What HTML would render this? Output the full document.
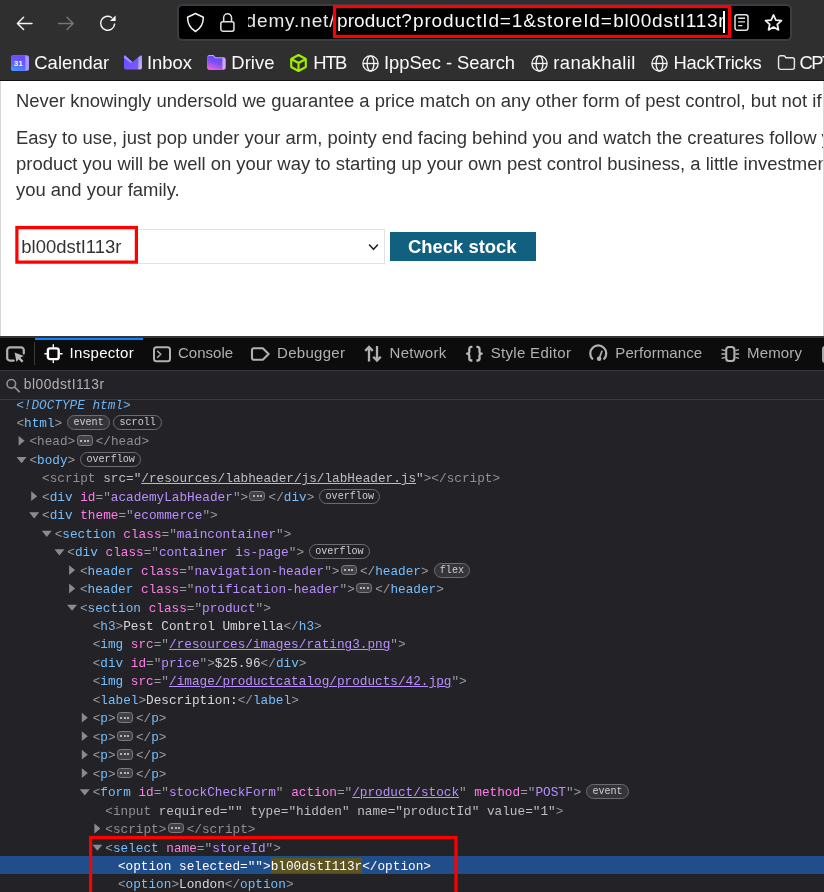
<!DOCTYPE html>
<html>
<head>
<meta charset="utf-8">
<style>
*{box-sizing:border-box;margin:0;padding:0}
html,body{width:824px;height:892px;overflow:hidden;background:#fff;font-family:"Liberation Sans",sans-serif}
#root{position:relative;width:824px;height:892px;overflow:hidden;will-change:transform}
svg{position:absolute;overflow:visible}
/* ---------- browser chrome ---------- */
#chrome{position:absolute;left:0;top:0;width:824px;height:80px;background:#2f2f2f;overflow:hidden}
#chromeline{position:absolute;left:0;top:79.700px;width:824px;height:1.100px;background:#121212}
#urlbar{position:absolute;left:177px;top:4px;width:615px;height:37px;background:#000;border:2px solid #3b3d43;border-radius:5.500px}
.urltxt{position:absolute;top:3.2px;font-size:19px;line-height:24px;letter-spacing:0.62px;color:#fbfbfe;white-space:nowrap}
.bm{position:absolute;top:50.5px;font-size:18.4px;line-height:24px;color:#fbfbfe;white-space:nowrap}
/* ---------- page ---------- */
#page{position:absolute;left:0;top:81px;width:824px;height:255px;background:#fff;overflow:hidden}
.pt{position:absolute;left:16px;font-size:18.46px;line-height:26px;color:#333332;white-space:nowrap}
/* ---------- devtools ---------- */
#dt{position:absolute;left:0;top:336px;width:824px;height:556px;background:#232327;overflow:hidden}
#dtbar{position:absolute;left:0;top:0;width:824px;height:35px;background:#0c0c0d;border-top:2px solid #36363a;border-bottom:1px solid #38383d}
.tab{position:absolute;top:8px;font-size:15px;line-height:18px;color:#b1b1b3;white-space:nowrap}
#search{position:absolute;left:0;top:35px;width:824px;height:29px;background:#232327;border-bottom:1px solid #3a3a3f}
#tree{position:absolute;left:0;top:64px;width:824px;height:492px;overflow:hidden;font-family:"Liberation Mono",monospace;font-size:12.72px;color:#b1b1b3}
.r{position:absolute;left:0;width:824px;height:18.46px;line-height:18.46px;white-space:pre}
.r>span.l{position:absolute;top:0;left:0}
.t{color:#75bfff}.g{color:#9a9a9e}.a{color:#ff7de9}.v{color:#b98eff}.w{color:#d7d7db}.d{color:#8f8f94}.dl{color:#bdbdc2}
.u{text-decoration:underline;text-underline-offset:.7px;text-decoration-thickness:1px}
.bd{display:inline-block;vertical-align:top;margin-top:.2px;height:15px;line-height:13.7px;border:1px solid #6c6c71;border-radius:7.5px;font-size:10.1px;color:#cfcfd3;padding:0 5.2px;margin-left:5px}
.bd.f{background:#343439}
.el{display:inline-block;vertical-align:top;margin:1.9px 3.1px 0 1.3px;width:16px;height:10.5px;border:1px solid #7c7c81;border-radius:3.5px;background:#414146;position:relative}
.el i{position:absolute;top:3.3px;width:2px;height:2px;border-radius:1px;background:#dcdce0}
.tw{position:absolute}
.s{color:#fff}
.hl{color:#fff}
</style>
</head>
<body>
<div id="root">
<div id="chrome">
<!-- back -->
<svg style="left:15px;top:14px" width="19" height="19" viewBox="0 0 19 19"><g transform="translate(0.60,0.40) scale(1.0000,1.0000)"><path d="M16.400 9H2M8 2.800L1.800 9l6.200 6.200" fill="none" stroke="#f4f4f6" stroke-width="1.450" stroke-linecap="round" stroke-linejoin="round"/></g></svg>
<!-- forward -->
<svg style="left:57px;top:14px" width="19" height="19" viewBox="0 0 19 19"><g transform="translate(0.00,0.40) scale(1.0000,1.0000)"><path d="M1.500 9H16M10 2.800L16.200 9l-6.200 6.200" fill="none" stroke="#767676" stroke-width="1.450" stroke-linecap="round" stroke-linejoin="round"/></g></svg>
<!-- reload -->
<svg style="left:99px;top:14px" width="19" height="19" viewBox="0 0 19 19"><g transform="translate(0.00,0.30) scale(1.0000,1.0000)"><path d="M15.600 9.800A7 7 0 1 1 12.600 3.200" fill="none" stroke="#f4f4f6" stroke-width="1.450" stroke-linecap="round"/><path d="M16.6 1.2v5.6h-5.6z" fill="#fbfbfe"/></g></svg>
<div id="urlbar"></div>
<!-- shield -->
<svg style="left:186px;top:12px" width="20" height="22" viewBox="0 0 20 22"><g transform="translate(0.00,0.00) scale(1.0000,1.0000)"><path d="M9.450 1.550L17.350 5.200C17.350 11.500 14.300 16.600 9.450 19.500 4.600 16.600 1.550 11.500 1.550 5.200z" fill="none" stroke="#f4f4f6" stroke-width="1.500" stroke-linejoin="round"/></g></svg>
<!-- lock -->
<svg style="left:220px;top:12px" width="17" height="22" viewBox="0 0 17 22"><g transform="translate(0.00,0.00) scale(1.0000,1.0000)"><rect x=".850" y="9.650" width="13.100" height="9.500" rx="1.900" fill="none" stroke="#e2e2e4" stroke-width="1.500"/><path d="M3.650 9.600V5.700a3.950 3.950 0 0 1 7.900 0V9.600" fill="none" stroke="#e2e2e4" stroke-width="1.500"/></g></svg>
<div style="position:absolute;left:247.700px;top:6px;width:479.300px;height:33px;overflow:hidden">
<div class="urltxt" style="right:391.600px;letter-spacing:.87px;color:#e9e9ed">ademy.net/</div>
<div class="urltxt" style="left:89.300px;letter-spacing:.12px">product?</div>
<div class="urltxt" style="left:165.300px;letter-spacing:.85px">productId=1&amp;storeId=</div>
<div class="urltxt" style="left:365.500px;letter-spacing:.75px">bl00dstI113r</div>
</div>
<div style="position:absolute;left:723px;top:11px;width:2.300px;height:21.5px;background:#fff"></div>
<svg style="left:330px;top:3px" width="405" height="39" viewBox="0 0 405 39"><g transform="translate(0.00,0.00) scale(1.0000,1.0000)"><rect x="4.500" y="3.500" width="395.100" height="29.900" fill="none" stroke="#fb0007" stroke-width="3.200"/></g></svg>
<!-- reader -->
<svg style="left:734px;top:13px" width="16" height="19" viewBox="0 0 16 19"><g transform="translate(0.20,0.90) scale(1.0000,1.0000)"><rect x=".8" y=".8" width="13" height="15.500" rx="2.300" fill="none" stroke="#e4e4e8" stroke-width="1.500"/><path d="M4 4.300h6.800M4 8h6.800M4 11.700h4.200" stroke="#e4e4e8" stroke-width="1.400" fill="none"/></g></svg>
<!-- star -->
<svg style="left:764px;top:13px" width="20" height="19" viewBox="0 0 20 19"><g transform="translate(0.00,0.40) scale(1.0000,1.0000)"><path d="M9.500 1.500l2.350 5.150 5.650.6-4.200 3.800 1.200 5.500-5-2.850-5 2.850 1.200-5.500L1.500 7.250l5.650-.6z" fill="none" stroke="#f4f4f6" stroke-width="1.700" stroke-linejoin="round"/></g></svg>

<!-- bookmarks -->
<!-- calendar -->
<svg style="left:11px;top:55px" width="19" height="17" viewBox="0 0 19 17"><g transform="translate(0.00,0.30) scale(1.0000,1.0000)"><defs><linearGradient id="gc" x1=".3" y1="0" x2="0" y2="1"><stop offset="0" stop-color="#6f48ff"/><stop offset=".55" stop-color="#5a6bff"/><stop offset="1" stop-color="#3aa2ff"/></linearGradient></defs><rect x="0" y="0" width="18" height="15.500" rx="2.600" fill="#a796ff"/><path d="M2.600 0H14.300V15.500H2.600A2.600 2.600 0 0 1 0 12.900V2.600A2.600 2.600 0 0 1 2.600 0z" fill="url(#gc)"/><text x="7.400" y="11" font-family="Liberation Sans" font-weight="700" font-size="7.800" fill="#fff" text-anchor="middle">31</text></g></svg>
<div class="bm" style="left:34.300px;letter-spacing:0.04px">Calendar</div>
<!-- inbox -->
<svg style="left:124px;top:55px" width="19" height="16" viewBox="0 0 19 16"><g transform="translate(0.00,0.40) scale(1.0000,1.0000)"><defs><linearGradient id="gi" x1="0" y1="0" x2="1" y2="1"><stop offset="0" stop-color="#6a46ff"/><stop offset="1" stop-color="#7d5eff"/></linearGradient><linearGradient id="gi2" x1="0" y1="0" x2="0" y2="1"><stop offset="0" stop-color="#a48eff"/><stop offset="1" stop-color="#c2b4ff"/></linearGradient></defs><path d="M0 1.200C0 .3.900-.1 1.600.5L8.400 6.700 14.200 1.900V14.200H1.800A1.800 1.800 0 0 1 0 12.400z" fill="url(#gi)"/><path d="M0 1.200C0 .3.900-.1 1.600.5L8.400 6.700 7.100 7.800 0 2.300z" fill="#a593ff"/><path d="M14.200 1.900L16.300.3C17-.2 18 .2 18 1.100V12.400A1.800 1.800 0 0 1 16.200 14.200H14.200z" fill="url(#gi2)"/></g></svg>
<div class="bm" style="left:147px;letter-spacing:0.00px">Inbox</div>
<!-- drive -->
<svg style="left:207px;top:55px" width="20" height="16" viewBox="0 0 20 16"><g transform="translate(0.30,0.10) scale(1.0000,1.0000)"><defs><linearGradient id="gd" x1=".65" y1="0" x2=".25" y2="1"><stop offset="0" stop-color="#6246ff"/><stop offset=".45" stop-color="#7a4ff6"/><stop offset="1" stop-color="#ea62d6"/></linearGradient><linearGradient id="gd2" x1="0" y1="0" x2="0" y2="1"><stop offset="0" stop-color="#c4a6ff"/><stop offset="1" stop-color="#e9a2ee"/></linearGradient></defs><path d="M0 2.300A2.300 2.300 0 0 1 2.300 0H6.200l2 2.200h7.900a2.300 2.300 0 0 1 2.300 2.300v7.900a2.300 2.300 0 0 1-2.300 2.300H2.300A2.300 2.300 0 0 1 0 12.400z" fill="url(#gd2)"/><path d="M0 2.600A2 2 0 0 1 2 .9H5.800l2 2.200h7.300V14.700H2.300A2.300 2.300 0 0 1 0 12.400z" fill="url(#gd)"/></g></svg>
<div class="bm" style="left:231.300px;letter-spacing:0.07px">Drive</div>
<!-- htb -->
<svg style="left:290px;top:54px" width="18" height="19" viewBox="0 0 18 19"><g transform="translate(0.00,0.00) scale(1.0000,1.0000)"><path d="M8.500 1L15.800 5v8L8.500 17 1.200 13V5zM1.200 5l7.300 4 7.300-4M8.500 9v8" fill="none" stroke="#9fef00" stroke-width="2.100" stroke-linejoin="round"/></g></svg>
<div class="bm" style="left:313.300px;letter-spacing:-1.43px">HTB</div>
<!-- globes -->
<svg style="left:362px;top:55px" width="18" height="18" viewBox="0 0 18 18"><g transform="translate(0.00,0.00) scale(1.0000,1.0000)"><g fill="none" stroke="#f4f4f6" stroke-width="1.350"><circle cx="8.500" cy="8.500" r="7.600"/><ellipse cx="8.500" cy="8.500" rx="3.400" ry="7.600"/><path d="M1 8.500h15"/></g></g></svg>
<div class="bm" style="left:384px;letter-spacing:-0.06px">IppSec - Search</div>
<svg style="left:531px;top:55px" width="18" height="18" viewBox="0 0 18 18"><g transform="translate(0.00,0.00) scale(1.0000,1.0000)"><g fill="none" stroke="#f4f4f6" stroke-width="1.350"><circle cx="8.500" cy="8.500" r="7.600"/><ellipse cx="8.500" cy="8.500" rx="3.400" ry="7.600"/><path d="M1 8.500h15"/></g></g></svg>
<div class="bm" style="left:553.300px;letter-spacing:0.37px">ranakhalil</div>
<svg style="left:651px;top:55px" width="18" height="18" viewBox="0 0 18 18"><g transform="translate(0.00,0.00) scale(1.0000,1.0000)"><g fill="none" stroke="#f4f4f6" stroke-width="1.350"><circle cx="8.500" cy="8.500" r="7.600"/><ellipse cx="8.500" cy="8.500" rx="3.400" ry="7.600"/><path d="M1 8.500h15"/></g></g></svg>
<div class="bm" style="left:673.500px;letter-spacing:-0.23px">HackTricks</div>
<!-- folder -->
<svg style="left:777px;top:54px" width="19" height="17" viewBox="0 0 19 17"><g transform="translate(0.80,0.90) scale(1.0000,1.0000)"><path d="M.750 2.750A2 2 0 0 1 2.750.750H5.700c.7 0 1.100.2 1.500.8l.9 1.300h6.500a2 2 0 0 1 2 2v7.600a2 2 0 0 1-2 2H2.750a2 2 0 0 1-2-2z" fill="none" stroke="#e6e6e8" stroke-width="1.450" stroke-linejoin="round"/></g></svg>
<div class="bm" style="left:799.500px;letter-spacing:-1.500px">CPTS</div>
</div>
<div id="chromeline"></div>
<div id="page">
<div class="pt" style="top:7px">Never knowingly undersold we guarantee a price match on any other form of pest control, but not if</div>
<div class="pt" style="top:44px">Easy to use, just pop under your arm, pointy end facing behind you and watch the creatures follow you</div>
<div class="pt" style="top:70px">product you will be well on your way to starting up your own pest control business, a little investment</div>
<div class="pt" style="top:96px">you and your family.</div>
<!-- select -->
<div style="position:absolute;left:16px;top:148px;width:369px;height:35px;border:1px solid #e0e3e3;background:#fff"></div>
<div style="position:absolute;left:21.300px;top:153px;font-size:18.440px;line-height:26px;color:#333332;white-space:nowrap">bl00dstI113r</div>
<svg style="left:368px;top:162px" width="11" height="8" viewBox="0 0 11 8"><g transform="translate(0.50,0.80) scale(1.0000,1.0000)"><path d="M1 1.200l4 4.300 4-4.300" fill="none" stroke="#222" stroke-width="1.600" stroke-linecap="round" stroke-linejoin="round"/></g></svg>
<svg style="left:14px;top:143px" width="128" height="43" viewBox="0 0 128 43"><g transform="translate(0.00,0.00) scale(1.0000,1.0000)"><rect x="2.900" y="3.500" width="119.500" height="34.600" fill="none" stroke="#fe0000" stroke-width="3.200"/></g></svg>
<!-- button -->
<div style="position:absolute;left:390px;top:151px;width:146px;height:28.700px;background:#11607f"></div>
<div style="position:absolute;left:408px;top:152.500px;font-size:18.440px;font-weight:700;line-height:26px;color:#fff;white-space:nowrap">Check stock</div>
<div style="position:absolute;left:0;top:0;width:1px;height:255px;background:#d6d6d6"></div>
<div style="position:absolute;left:823px;top:0;width:1px;height:255px;background:#d8d8d8"></div>
</div>
<div id="dt">
<div id="dtbar"></div>
<div style="position:absolute;left:35px;top:1.500px;width:108px;height:2.500px;background:#0a84ff"></div>
<!-- picker -->
<svg style="left:6px;top:10px" width="21" height="18" viewBox="0 0 21 18"><g transform="translate(0.00,0.20) scale(1.0000,1.0000)"><path d="M7.800 14.400H3.900a2.700 2.700 0 0 1-2.700-2.700V3.900a2.700 2.700 0 0 1 2.700-2.700h11.200a2.700 2.700 0 0 1 2.700 2.700v3.400" fill="none" stroke="#b1b1b3" stroke-width="2.200" stroke-linecap="round"/><path d="M8.600 6.200l1.900 9.600 2.100-2.800 3.100 3.400 1.800-1.700-3.200-3.300 3.500-1.500z" fill="#b9b9bb"/></g></svg>
<div style="position:absolute;left:34px;top:6px;width:1px;height:22.500px;background:#38383d"></div>
<!-- inspector icon -->
<svg style="left:44px;top:8px" width="20" height="20" viewBox="0 0 20 20"><g transform="translate(0.40,0.20) scale(1.0000,1.0000)"><rect x="3.500" y="4.150" width="10.800" height="10.800" rx="2.200" fill="none" stroke="#fff" stroke-width="2.400"/><path d="M8.900 0v3.200M8.900 16v2.800M0 9.550h2.500M15.300 9.550h2.900" stroke="#fff" stroke-width="1.400" fill="none"/></g></svg>
<div class="tab" style="left:69.600px;color:#fff;letter-spacing:.3px">Inspector</div>
<!-- console icon -->
<svg style="left:153px;top:10px" width="19" height="17" viewBox="0 0 19 17"><g transform="translate(0.00,0.30) scale(1.0000,1.0000)"><rect x="1" y="1" width="16" height="14" rx="2.500" fill="none" stroke="#b1b1b3" stroke-width="2"/><path d="M4.600 5l3.200 3-3.200 3" fill="none" stroke="#b1b1b3" stroke-width="1.500" stroke-linecap="round" stroke-linejoin="round"/></g></svg>
<div class="tab" style="left:178px;letter-spacing:.02px">Console</div>
<!-- debugger icon -->
<svg style="left:251px;top:11px" width="20" height="15" viewBox="0 0 20 15"><g transform="translate(0.00,0.20) scale(1.0000,1.0000)"><path d="M2.800 1h9l5.800 5.750-5.800 5.750h-9A1.800 1.800 0 0 1 1 10.700V2.800A1.800 1.800 0 0 1 2.800 1z" fill="none" stroke="#b1b1b3" stroke-width="2.100" stroke-linejoin="round"/></g></svg>
<div class="tab" style="left:277px;letter-spacing:.3px">Debugger</div>
<!-- network icon -->
<svg style="left:364px;top:9px" width="19" height="18" viewBox="0 0 19 18"><g transform="translate(0.00,0.30) scale(1.0000,1.0000)"><path d="M5 16.200V2M1.200 5.600l3.800-3.900 3.800 3.900M13 .8v14.200M9.200 11.400l3.800 3.900 3.800-3.900" fill="none" stroke="#b1b1b3" stroke-width="2.300" stroke-linecap="butt" stroke-linejoin="miter"/></g></svg>
<div class="tab" style="left:389.500px;letter-spacing:.3px">Network</div>
<!-- style editor icon -->
<svg style="left:465px;top:9px" width="19" height="17" viewBox="0 0 19 17"><g transform="translate(0.40,0.80) scale(1.0000,1.0000)"><path d="M7 1.100H5.900a2 2 0 0 0-2 2v2.800a2 2 0 0 1-2.200 2 2 2 0 0 1 2.200 2v2.800a2 2 0 0 0 2 2H7M11 1.100h1.100a2 2 0 0 1 2 2v2.800a2 2 0 0 0 2.200 2 2 2 0 0 0-2.200 2v2.800a2 2 0 0 1-2 2H11" fill="none" stroke="#b9b9bb" stroke-width="2.300" stroke-linejoin="round"/></g></svg>
<div class="tab" style="left:490.700px;letter-spacing:.32px">Style Editor</div>
<!-- performance icon -->
<svg style="left:589px;top:9px" width="20" height="18" viewBox="0 0 20 18"><g transform="translate(0.00,0.00) scale(1.0000,1.0000)"><path d="M3.300 13.800A8 8 0 1 1 15.200 13.800" fill="none" stroke="#b1b1b3" stroke-width="2.200" stroke-linecap="round"/><circle cx="10.100" cy="13.700" r="2.300" fill="#b1b1b3"/><path d="M10.300 13.300l2.600-7" stroke="#b1b1b3" stroke-width="1.700" stroke-linecap="round"/></g></svg>
<div class="tab" style="left:615.300px;letter-spacing:.1px">Performance</div>
<!-- memory icon -->
<svg style="left:721px;top:10px" width="20" height="17" viewBox="0 0 20 17"><g transform="translate(0.00,0.00) scale(1.0000,1.0000)"><rect x="5.200" y="1" width="8.200" height="14" rx="2.800" fill="none" stroke="#b1b1b3" stroke-width="2.100"/><path d="M.6 3.600l3.600 1M.4 8H4.200M.6 12.400l3.600-1M18 3.600l-3.600 1M18.200 8h-3.800M18 12.400l-3.600-1" stroke="#b1b1b3" stroke-width="1.500" fill="none"/></g></svg>
<div class="tab" style="left:747px;letter-spacing:.15px">Memory</div>
<div style="position:absolute;left:821.600px;top:9.700px;width:10px;height:17px;border:2.200px solid #a9a9ab;border-radius:3px"></div>
<!-- search -->
<div id="search"></div>
<svg style="left:6px;top:42px" width="15" height="15" viewBox="0 0 15 15"><g transform="translate(0.00,0.50) scale(1.0000,1.0000)"><circle cx="5.300" cy="5.300" r="4.300" fill="none" stroke="#8f8f94" stroke-width="1.600"/><path d="M8.600 8.600l4.600 4.600" stroke="#8f8f94" stroke-width="1.800" stroke-linecap="round"/></g></svg>
<div style="position:absolute;left:23.800px;top:40px;font-size:13.800px;line-height:18px;color:#b1b1b3;letter-spacing:.48px;white-space:nowrap">bl00dstI113r</div>
<div id="tree">
<div class="r" style="top:-3.50px"><span class="l" style="left:16.15px"><span style="color:#6fb2f0;font-style:italic">&lt;!DOCTYPE html&gt;</span></span></div>
<div class="r" style="top:14.96px"><span class="l" style="left:16.45px"><span class="g">&lt;</span><span class="t">html</span><span class="g">&gt;</span><span class="bd f">event</span><span class="bd" style="margin-left:3.4px">scroll</span></span></div>
<svg class="tw" style="left:18px;top:35px" width="7" height="11" viewBox="0 0 7 11"><g transform="translate(0.60,0.92) scale(1.0000,1.0000)"><path d="M0 0L6 4.900 0 9.800z" fill="#8a8a8f"/></g></svg>
<div class="r" style="top:33.42px"><span class="l" style="left:29.45px"><span class="d">&lt;</span><span class="d">head</span><span class="d">&gt;</span><span class="el"><i style="left:2.6px"></i><i style="left:6.1px"></i><i style="left:9.6px"></i></span><span class="d">&lt;/</span><span class="d">head</span><span class="d">&gt;</span></span></div>
<svg class="tw" style="left:16px;top:56px" width="11" height="8" viewBox="0 0 11 8"><g transform="translate(0.55,0.98) scale(1.0000,1.0000)"><path d="M0 0H10L5 6.200z" fill="#8a8a8f"/></g></svg>
<div class="r" style="top:51.88px"><span class="l" style="left:29.45px"><span class="g">&lt;</span><span class="t">body</span><span class="g">&gt;</span><span class="bd">overflow</span></span></div>
<div class="r" style="top:70.34px"><span class="l" style="left:42.05px"><span class="d">&lt;</span><span class="d">script</span> <span class="dl">src</span><span class="dl">="</span><span class="dl"><span class="u">/resources/labheader/js/labHeader.js</span></span><span class="dl">"</span><span class="d">&gt;</span><span class="d">&lt;/</span><span class="d">script</span><span class="d">&gt;</span></span></div>
<svg class="tw" style="left:31px;top:91px" width="7" height="11" viewBox="0 0 7 11"><g transform="translate(0.20,0.30) scale(1.0000,1.0000)"><path d="M0 0L6 4.900 0 9.800z" fill="#8a8a8f"/></g></svg>
<div class="r" style="top:88.80px"><span class="l" style="left:42.05px"><span class="g">&lt;</span><span class="t">div</span> <span class="a">id</span><span class="g">="</span><span class="v">academyLabHeader</span><span class="g">"</span><span class="g">&gt;</span><span class="el"><i style="left:2.6px"></i><i style="left:6.1px"></i><i style="left:9.6px"></i></span><span class="g">&lt;/</span><span class="t">div</span><span class="g">&gt;</span><span class="bd">overflow</span></span></div>
<svg class="tw" style="left:29px;top:112px" width="11" height="8" viewBox="0 0 11 8"><g transform="translate(0.15,0.36) scale(1.0000,1.0000)"><path d="M0 0H10L5 6.200z" fill="#8a8a8f"/></g></svg>
<div class="r" style="top:107.26px"><span class="l" style="left:42.05px"><span class="g">&lt;</span><span class="t">div</span> <span class="a">theme</span><span class="g">="</span><span class="v">ecommerce</span><span class="g">"</span><span class="g">&gt;</span></span></div>
<svg class="tw" style="left:41px;top:130px" width="11" height="8" viewBox="0 0 11 8"><g transform="translate(0.75,0.82) scale(1.0000,1.0000)"><path d="M0 0H10L5 6.200z" fill="#8a8a8f"/></g></svg>
<div class="r" style="top:125.72px"><span class="l" style="left:54.65px"><span class="g">&lt;</span><span class="t">section</span> <span class="a">class</span><span class="g">="</span><span class="v">maincontainer</span><span class="g">"</span><span class="g">&gt;</span></span></div>
<svg class="tw" style="left:54px;top:149px" width="11" height="8" viewBox="0 0 11 8"><g transform="translate(0.45,0.28) scale(1.0000,1.0000)"><path d="M0 0H10L5 6.200z" fill="#8a8a8f"/></g></svg>
<div class="r" style="top:144.18px"><span class="l" style="left:67.35px"><span class="g">&lt;</span><span class="t">div</span> <span class="a">class</span><span class="g">="</span><span class="v">container is-page</span><span class="g">"</span><span class="g">&gt;</span><span class="bd">overflow</span></span></div>
<svg class="tw" style="left:69px;top:165px" width="7" height="11" viewBox="0 0 7 11"><g transform="translate(0.10,0.14) scale(1.0000,1.0000)"><path d="M0 0L6 4.900 0 9.800z" fill="#8a8a8f"/></g></svg>
<div class="r" style="top:162.64px"><span class="l" style="left:79.95px"><span class="g">&lt;</span><span class="t">header</span> <span class="a">class</span><span class="g">="</span><span class="v">navigation-header</span><span class="g">"</span><span class="g">&gt;</span><span class="el"><i style="left:2.6px"></i><i style="left:6.1px"></i><i style="left:9.6px"></i></span><span class="g">&lt;/</span><span class="t">header</span><span class="g">&gt;</span><span class="bd f">flex</span></span></div>
<svg class="tw" style="left:69px;top:183px" width="7" height="11" viewBox="0 0 7 11"><g transform="translate(0.10,0.60) scale(1.0000,1.0000)"><path d="M0 0L6 4.900 0 9.800z" fill="#8a8a8f"/></g></svg>
<div class="r" style="top:181.10px"><span class="l" style="left:79.95px"><span class="g">&lt;</span><span class="t">header</span> <span class="a">class</span><span class="g">="</span><span class="v">notification-header</span><span class="g">"</span><span class="g">&gt;</span><span class="el"><i style="left:2.6px"></i><i style="left:6.1px"></i><i style="left:9.6px"></i></span><span class="g">&lt;/</span><span class="t">header</span><span class="g">&gt;</span></span></div>
<svg class="tw" style="left:67px;top:204px" width="11" height="8" viewBox="0 0 11 8"><g transform="translate(0.05,0.66) scale(1.0000,1.0000)"><path d="M0 0H10L5 6.200z" fill="#8a8a8f"/></g></svg>
<div class="r" style="top:199.56px"><span class="l" style="left:79.95px"><span class="g">&lt;</span><span class="t">section</span> <span class="a">class</span><span class="g">="</span><span class="v">product</span><span class="g">"</span><span class="g">&gt;</span></span></div>
<div class="r" style="top:218.02px"><span class="l" style="left:92.65px"><span class="g">&lt;</span><span class="t">h3</span><span class="g">&gt;</span><span class="w">Pest Control Umbrella</span><span class="g">&lt;/</span><span class="t">h3</span><span class="g">&gt;</span></span></div>
<div class="r" style="top:236.48px"><span class="l" style="left:92.65px"><span class="g">&lt;</span><span class="t">img</span> <span class="a">src</span><span class="g">="</span><span class="v"><span class="u">/resources/images/rating3.png</span></span><span class="g">"</span><span class="g">&gt;</span></span></div>
<div class="r" style="top:254.94px"><span class="l" style="left:92.65px"><span class="g">&lt;</span><span class="t">div</span> <span class="a">id</span><span class="g">="</span><span class="v">price</span><span class="g">"</span><span class="g">&gt;</span><span class="w">$25.96</span><span class="g">&lt;/</span><span class="t">div</span><span class="g">&gt;</span></span></div>
<div class="r" style="top:273.40px"><span class="l" style="left:92.65px"><span class="g">&lt;</span><span class="t">img</span> <span class="a">src</span><span class="g">="</span><span class="v"><span class="u">/image/productcatalog/products/42.jpg</span></span><span class="g">"</span><span class="g">&gt;</span></span></div>
<div class="r" style="top:291.86px"><span class="l" style="left:92.65px"><span class="g">&lt;</span><span class="t">label</span><span class="g">&gt;</span><span class="w">Description:</span><span class="g">&lt;/</span><span class="t">label</span><span class="g">&gt;</span></span></div>
<svg class="tw" style="left:81px;top:312px" width="7" height="11" viewBox="0 0 7 11"><g transform="translate(0.80,0.82) scale(1.0000,1.0000)"><path d="M0 0L6 4.900 0 9.800z" fill="#8a8a8f"/></g></svg>
<div class="r" style="top:310.32px"><span class="l" style="left:92.65px"><span class="g">&lt;</span><span class="t">p</span><span class="g">&gt;</span><span class="el"><i style="left:2.6px"></i><i style="left:6.1px"></i><i style="left:9.6px"></i></span><span class="g">&lt;/</span><span class="t">p</span><span class="g">&gt;</span></span></div>
<svg class="tw" style="left:81px;top:331px" width="7" height="11" viewBox="0 0 7 11"><g transform="translate(0.80,0.28) scale(1.0000,1.0000)"><path d="M0 0L6 4.900 0 9.800z" fill="#8a8a8f"/></g></svg>
<div class="r" style="top:328.78px"><span class="l" style="left:92.65px"><span class="g">&lt;</span><span class="t">p</span><span class="g">&gt;</span><span class="el"><i style="left:2.6px"></i><i style="left:6.1px"></i><i style="left:9.6px"></i></span><span class="g">&lt;/</span><span class="t">p</span><span class="g">&gt;</span></span></div>
<svg class="tw" style="left:81px;top:349px" width="7" height="11" viewBox="0 0 7 11"><g transform="translate(0.80,0.74) scale(1.0000,1.0000)"><path d="M0 0L6 4.900 0 9.800z" fill="#8a8a8f"/></g></svg>
<div class="r" style="top:347.24px"><span class="l" style="left:92.65px"><span class="g">&lt;</span><span class="t">p</span><span class="g">&gt;</span><span class="el"><i style="left:2.6px"></i><i style="left:6.1px"></i><i style="left:9.6px"></i></span><span class="g">&lt;/</span><span class="t">p</span><span class="g">&gt;</span></span></div>
<svg class="tw" style="left:81px;top:368px" width="7" height="11" viewBox="0 0 7 11"><g transform="translate(0.80,0.20) scale(1.0000,1.0000)"><path d="M0 0L6 4.900 0 9.800z" fill="#8a8a8f"/></g></svg>
<div class="r" style="top:365.70px"><span class="l" style="left:92.65px"><span class="g">&lt;</span><span class="t">p</span><span class="g">&gt;</span><span class="el"><i style="left:2.6px"></i><i style="left:6.1px"></i><i style="left:9.6px"></i></span><span class="g">&lt;/</span><span class="t">p</span><span class="g">&gt;</span></span></div>
<svg class="tw" style="left:79px;top:389px" width="11" height="8" viewBox="0 0 11 8"><g transform="translate(0.75,0.26) scale(1.0000,1.0000)"><path d="M0 0H10L5 6.200z" fill="#8a8a8f"/></g></svg>
<div class="r" style="top:384.16px"><span class="l" style="left:92.65px"><span class="g">&lt;</span><span class="t">form</span> <span class="a">id</span><span class="g">="</span><span class="v">stockCheckForm</span><span class="g">"</span> <span class="a">action</span><span class="g">="</span><span class="v"><span class="u">/product/stock</span></span><span class="g">"</span> <span class="a">method</span><span class="g">="</span><span class="v">POST</span><span class="g">"</span><span class="g">&gt;</span><span class="bd f">event</span></span></div>
<div class="r" style="top:402.62px"><span class="l" style="left:105.25px"><span class="d">&lt;</span><span class="d">input</span> <span class="dl">required</span><span class="dl">="</span><span class="dl"></span><span class="dl">"</span> <span class="dl">type</span><span class="dl">="</span><span class="dl">hidden</span><span class="dl">"</span> <span class="dl">name</span><span class="dl">="</span><span class="dl">productId</span><span class="dl">"</span> <span class="dl">value</span><span class="dl">="</span><span class="dl">1</span><span class="dl">"</span><span class="d">&gt;</span></span></div>
<svg class="tw" style="left:94px;top:423px" width="7" height="11" viewBox="0 0 7 11"><g transform="translate(0.40,0.58) scale(1.0000,1.0000)"><path d="M0 0L6 4.900 0 9.800z" fill="#8a8a8f"/></g></svg>
<div class="r" style="top:421.08px"><span class="l" style="left:105.25px"><span class="d">&lt;</span><span class="d">script</span><span class="d">&gt;</span><span class="el"><i style="left:2.6px"></i><i style="left:6.1px"></i><i style="left:9.6px"></i></span><span class="d">&lt;/</span><span class="d">script</span><span class="d">&gt;</span></span></div>
<svg class="tw" style="left:92px;top:444px" width="11" height="8" viewBox="0 0 11 8"><g transform="translate(0.35,0.64) scale(1.0000,1.0000)"><path d="M0 0H10L5 6.200z" fill="#8a8a8f"/></g></svg>
<div class="r" style="top:439.54px"><span class="l" style="left:105.25px"><span class="g">&lt;</span><span class="t">select</span> <span class="a">name</span><span class="g">="</span><span class="v">storeId</span><span class="g">"</span><span class="g">&gt;</span></span></div>
<div style="position:absolute;left:0;top:456.1px;width:824px;height:18.4px;background:#204e8a"></div>
<div style="position:absolute;left:270.5px;top:458px;width:91.6px;height:15px;background:#5c5522"></div>
<div class="r" style="top:458.00px"><span class="l" style="left:117.95px"><span class="s">&lt;</span><span class="s">option</span> <span class="s">selected</span><span class="s">="</span><span class="s"></span><span class="s">"</span><span class="s">&gt;</span><span class="hl">bl00dstI113r</span><span class="s">&lt;/</span><span class="s">option</span><span class="s">&gt;</span></span></div>
<div class="r" style="top:476.46px"><span class="l" style="left:117.95px"><span class="g">&lt;</span><span class="t">option</span><span class="g">&gt;</span><span class="w">London</span><span class="g">&lt;/</span><span class="t">option</span><span class="g">&gt;</span></span></div>
<svg style="left:86px;top:433px" width="377" height="71" viewBox="0 0 377 71"><g transform="translate(0.00,0.00) scale(1.0000,1.0000)"><rect x="4.600" y="4.500" width="365.400" height="80" fill="none" stroke="#fe0000" stroke-width="3.200"/></g></svg>

</div>
</div>
</div>
</body>
</html>
